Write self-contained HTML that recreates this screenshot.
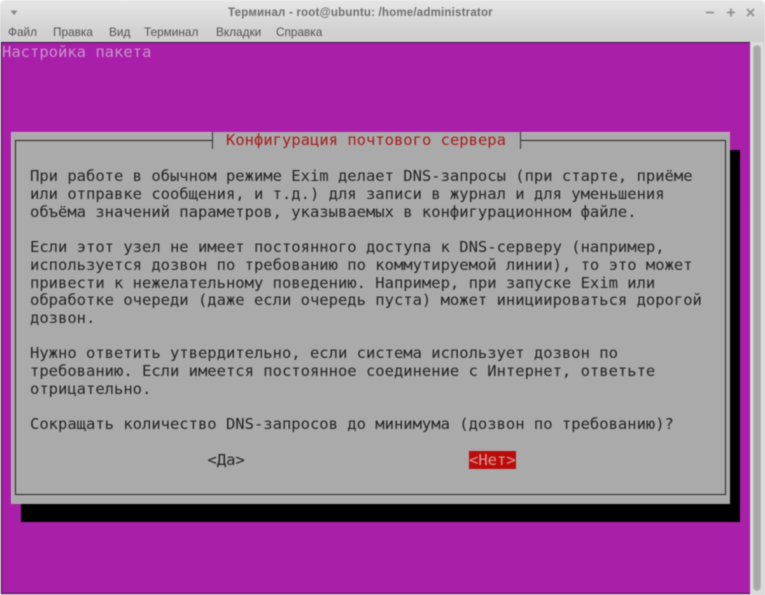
<!DOCTYPE html>
<html lang="ru">
<head>
<meta charset="utf-8">
<title>Терминал</title>
<style>
html,body{margin:0;padding:0;width:765px;height:595px;overflow:hidden;background:#fff}
#win{position:absolute;left:0;top:0;width:765px;height:595px;border-radius:5px 5px 0 0;background:linear-gradient(#e6e6e6 0,#d2d2d2 30px,#cfcfcf 42px,#d0d0d0 100%);overflow:hidden;filter:blur(.45px)}
.ui{position:absolute;font-family:"Liberation Sans",sans-serif;white-space:nowrap}
#title{left:228px;top:6px;font-size:11.5px;font-weight:bold;color:#6f6f6f;line-height:14px;letter-spacing:.2px}
.m{top:25px;font-size:11.8px;line-height:15px;color:#525252}
#term{position:absolute;left:1px;top:42px;width:749px;height:552px;background:#a91fa9;box-shadow:inset 0 1px 0 #3a0f42,inset 1px 0 0 #4a1550,inset 0 -1px 0 #3a0f42}
#sb{position:absolute;left:751px;top:42px;width:13px;height:552px;background:#dcdcdc}
#thumb{position:absolute;left:2px;top:3px;width:8px;height:546px;background:#a9a9a9;border-radius:4px;border:1px solid #b8b8b8;box-sizing:border-box}
.b{position:absolute}
.t{position:absolute;font-family:"DejaVu Sans Mono",monospace;font-size:15.5px;line-height:18px;white-space:pre;color:#252525}
</style>
</head>
<body>
<div id="win">
  <svg class="b" style="left:10px;top:10px" width="9" height="6"><path d="M0.5 0.5h7L4 5z" fill="#8a8a8a"/></svg>
  <div id="title" class="ui">Терминал - root@ubuntu: /home/administrator</div>
  <svg class="b" style="left:705px;top:6px" width="52" height="13">
    <path d="M1 6.5h8" stroke="#909090" stroke-width="1.8" fill="none"/>
    <path d="M22 6.5h8M26 2.5v8" stroke="#909090" stroke-width="1.8" fill="none"/>
    <path d="M42 3l7 7M49 3l-7 7" stroke="#909090" stroke-width="1.8" fill="none"/>
  </svg>
  <div class="ui m" style="left:8px">Файл</div>
  <div class="ui m" style="left:53px">Правка</div>
  <div class="ui m" style="left:109px">Вид</div>
  <div class="ui m" style="left:144px">Терминал</div>
  <div class="ui m" style="left:216px">Вкладки</div>
  <div class="ui m" style="left:276px">Справка</div>

  <div id="term"></div>
  <div id="sb"><div id="thumb"></div></div>

  <div class="b" style="left:21px;top:150px;width:719px;height:372px;background:#000"></div>
  <div class="b" style="left:11px;top:132px;width:719px;height:372px;background:#aaa;box-shadow:inset 1px 1px 0 #c6b4c6"></div>
  <div class="b" style="left:15px;top:140px;width:711px;height:355px;border:1px solid #222;box-sizing:border-box"></div>
  <div class="b" style="left:212px;top:132px;width:309px;height:17px;background:#aaa"></div>
  <div class="b" style="left:212px;top:132px;width:1px;height:17px;background:#333"></div>
  <div class="b" style="left:520px;top:132px;width:1px;height:17px;background:#333"></div>

  <div class="t" style="left:2px;top:43px;color:#c793cb">Настройка пакета</div>
  <div class="t" style="left:226px;top:131px;color:#a81c1c">Конфигурация почтового сервера</div>

  <div class="t" style="left:30px;top:167px">При работе в обычном режиме Exim делает DNS-запросы (при старте, приёме</div>
  <div class="t" style="left:30px;top:185px">или отправке сообщения, и т.д.) для записи в журнал и для уменьшения</div>
  <div class="t" style="left:30px;top:203px">объёма значений параметров, указываемых в конфигурационном файле.</div>
  <div class="t" style="left:30px;top:238px">Если этот узел не имеет постоянного доступа к DNS-серверу (например,</div>
  <div class="t" style="left:30px;top:256px">используется дозвон по требованию по коммутируемой линии), то это может</div>
  <div class="t" style="left:30px;top:274px">привести к нежелательному поведению. Например, при запуске Exim или</div>
  <div class="t" style="left:30px;top:291px">обработке очереди (даже если очередь пуста) может инициироваться дорогой</div>
  <div class="t" style="left:30px;top:309px">дозвон.</div>
  <div class="t" style="left:30px;top:344px">Нужно ответить утвердительно, если система использует дозвон по</div>
  <div class="t" style="left:30px;top:362px">требованию. Если имеется постоянное соединение с Интернет, ответьте</div>
  <div class="t" style="left:30px;top:380px">отрицательно.</div>
  <div class="t" style="left:30px;top:415px">Сокращать количество DNS-запросов до минимума (дозвон по требованию)?</div>

  <div class="t" style="left:207.5px;top:451px">&lt;Да&gt;</div>
  <div class="b" style="left:469px;top:451px;width:47px;height:18px;background:#bb0c0c"></div>
  <div class="t" style="left:469px;top:451px;color:#dc9a94">&lt;Нет&gt;</div>
</div>
</body>
</html>
